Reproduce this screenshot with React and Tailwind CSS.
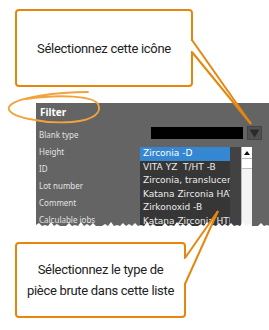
const labels = ['Blank type', 'Height', 'ID', 'Lot number', 'Comment', 'Calculable jobs'];
const items = ['Zirconia -D', 'VITA YZ  T/HT -B', 'Zirconia, translucent', 'Katana Zirconia HAT', 'Zirkonoxid -B', 'Katana Zirconia HTI'];

// torn paper edge along the bottom of the panel
function tornPath(width) {
  const hs = [2, 4, 1, 3, 5, 2, 4, 1, 3, 2, 5, 3, 1, 4, 2, 3];
  let d = 'M0 7 L0 4';
  let x = 0;
  let i = 0;
  while (x < width) {
    x += 3;
    d += ` L${x} ${hs[i % hs.length]}`;
    x += 3;
    d += ` L${x} 5`;
    i++;
  }
  return d + ` L${width} 7 Z`;
}

export default function App() {
  return (
    <div className="relative w-[269px] h-[330px] bg-white overflow-hidden" style={{ fontFamily: 'Roboto, sans-serif' }}>
      {/* top callout */}
      <div className="ml-[15px] mt-[9px] w-[178px] h-[78px] border-2 border-[#e5870f] rounded-[4px] flex items-center justify-center">
        <span className="text-[13px] tracking-[-0.3px] text-[#222] mb-[-2px]">Sélectionnez cette icône</span>
      </div>

      {/* filter panel */}
      <div className="relative ml-[36px] mt-[16px] h-[125px] bg-[#646464] overflow-hidden" style={{ fontFamily: '"Noto Sans", sans-serif' }}>
        <div className="pl-[4px] pt-[2px] h-[23px] text-[10px] leading-[14px] font-bold text-white">Filter</div>
        <div className="flex">
          <div className="w-[104px] pl-[3px] flex flex-col text-[8px] text-[#e2e2e2]">
            {labels.map((l) => (
              <div key={l} className="h-[17px] leading-[17px]">{l}</div>
            ))}
          </div>
          <div className="flex flex-col">
            <div className="flex items-start gap-[4px] pl-[11px]">
              <div className="mt-[1px] w-[92px] h-[12px] bg-black" />
              <div className="w-[15px] h-[14px] bg-[#505050] border border-[#444] flex items-center justify-center">
                <svg width="11" height="9" viewBox="0 0 11 9">
                  <path d="M0.5 0.5 L10.5 0.5 L5.5 8.5 Z" fill="#2a2a2a" />
                </svg>
              </div>
            </div>
            <div className="mt-[7px] flex w-[112px] h-[90px]">
              <div className="w-[90px] bg-[#363636] flex flex-col" style={{ fontFamily: '"DejaVu Sans", sans-serif' }}>
                {items.map((it, i) => (
                  <div
                    key={it}
                    className={`h-[13.5px] leading-[13.5px] pl-[3px] text-[9px] whitespace-pre overflow-hidden ${i === 0 ? 'bg-[#3487d0] text-white' : 'text-[#ececec]'}`}
                  >
                    {it}
                  </div>
                ))}
              </div>
              <div className="w-[11px] bg-[#424242]" />
              <div className="w-[11px] bg-[#f4f4f4] border-l border-[#bbb] flex flex-col">
                <div className="h-[12px] bg-white border-b border-[#bbb] flex items-center justify-center">
                  <svg width="6" height="4" viewBox="0 0 6 4">
                    <path d="M0 4 L3 0 L6 4 Z" fill="#111" />
                  </svg>
                </div>
                <div className="h-[10px] bg-white border-b border-[#bbb]" />
              </div>
            </div>
          </div>
        </div>
        <svg className="absolute left-0 bottom-0" width="233" height="7" viewBox="0 0 233 7">
          <path d={tornPath(233)} fill="#fff" />
        </svg>
      </div>

      {/* bottom callout */}
      <div className="ml-[15px] mt-[14px] w-[171px] h-[76px] border-2 border-[#e5870f] rounded-[4px] flex flex-col items-center justify-center text-[13px] leading-[21px] tracking-[-0.3px] text-[#222]">
        <span>Sélectionnez le type de</span>
        <span>pièce brute dans cette liste</span>
      </div>

      {/* pointers and highlight ellipse */}
      <svg className="absolute left-0 top-0 pointer-events-none" width="269" height="330" viewBox="0 0 269 330">
        <polygon points="188,41 192,41 251,124 192,51 188,51" fill="#fff" />
        <line x1="192" y1="40" x2="251" y2="124" stroke="#e5870f" strokeWidth="2" />
        <line x1="192" y1="52" x2="251" y2="124" stroke="#e5870f" strokeWidth="2" />
        <polygon points="181,259 185,259 218,211 185,283 181,283" fill="#fff" />
        <line x1="185" y1="258" x2="218" y2="211" stroke="#e5870f" strokeWidth="2" />
        <line x1="185" y1="284" x2="218" y2="211" stroke="#e5870f" strokeWidth="2" />
        <path
          d="M88 92 C60 92 14 97 9 107 C5 117 45 124 72 122 C95 120 102 112 98 104 C93 96 60 94 26 99"
          fill="none"
          stroke="#f2a33c"
          strokeWidth="1.8"
          strokeLinecap="round"
        />
      </svg>
    </div>
  );
}
